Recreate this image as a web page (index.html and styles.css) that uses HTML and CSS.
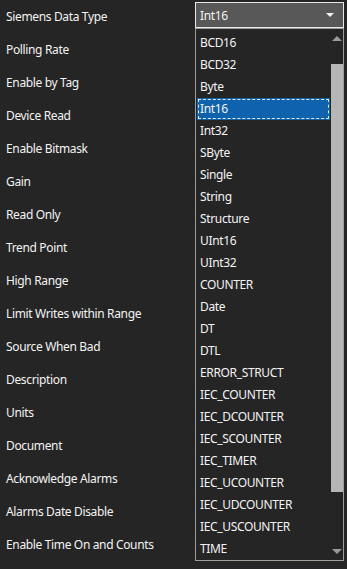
FILE: index.html
```html
<!DOCTYPE html>
<html lang="en">
<head>
    <meta charset="UTF-8">
    <meta name="viewport" content="width=device-width, initial-scale=1.0">
    <title>Tag Properties</title>
    <link rel="stylesheet" href="styles.css">
</head>
<body>
    <div class="props">
        <div class="row">
            <div class="label">Siemens Data Type</div>
            <div class="value">
                <div class="combo">
                    <div class="combo-box">
                        <span>Int16</span>
                        <span class="combo-arrow"></span>
                    </div>
                    <div class="dropdown">
                        <ul class="list">
                            <li>BCD16</li>
                            <li>BCD32</li>
                            <li>Byte</li>
                            <li class="selected">Int16</li>
                            <li>Int32</li>
                            <li>SByte</li>
                            <li>Single</li>
                            <li>String</li>
                            <li>Structure</li>
                            <li>UInt16</li>
                            <li>UInt32</li>
                            <li>COUNTER</li>
                            <li>Date</li>
                            <li>DT</li>
                            <li>DTL</li>
                            <li>ERROR_STRUCT</li>
                            <li>IEC_COUNTER</li>
                            <li>IEC_DCOUNTER</li>
                            <li>IEC_SCOUNTER</li>
                            <li>IEC_TIMER</li>
                            <li>IEC_UCOUNTER</li>
                            <li>IEC_UDCOUNTER</li>
                            <li>IEC_USCOUNTER</li>
                            <li>TIME</li>
                        </ul>
                        <div class="scrollbar">
                            <span class="arrow-up"></span>
                            <div class="track"><div class="thumb"></div></div>
                            <span class="arrow-down"></span>
                        </div>
                    </div>
                </div>
            </div>
        </div>
        <div class="row"><div class="label">Polling Rate</div><div class="value"></div></div>
        <div class="row"><div class="label">Enable by Tag</div><div class="value"></div></div>
        <div class="row"><div class="label">Device Read</div><div class="value"></div></div>
        <div class="row"><div class="label">Enable Bitmask</div><div class="value"></div></div>
        <div class="row"><div class="label">Gain</div><div class="value"></div></div>
        <div class="row"><div class="label">Read Only</div><div class="value"></div></div>
        <div class="row"><div class="label">Trend Point</div><div class="value"></div></div>
        <div class="row"><div class="label">High Range</div><div class="value"></div></div>
        <div class="row"><div class="label">Limit Writes within Range</div><div class="value"></div></div>
        <div class="row"><div class="label">Source When Bad</div><div class="value"></div></div>
        <div class="row"><div class="label">Description</div><div class="value"></div></div>
        <div class="row"><div class="label">Units</div><div class="value"></div></div>
        <div class="row"><div class="label">Document</div><div class="value"></div></div>
        <div class="row"><div class="label">Acknowledge Alarms</div><div class="value"></div></div>
        <div class="row"><div class="label">Alarms Date Disable</div><div class="value"></div></div>
        <div class="row"><div class="label">Enable Time On and Counts</div><div class="value"></div></div>
    </div>
</body>
</html>
```

FILE: styles.css
```css
/* Panel */
body {
    margin: 0;
    background-color: #252526;
    color: #f3f3f3;
    font-family: 'Noto Sans', 'Open Sans', sans-serif;
    font-size: 12px;
    letter-spacing: -0.35px;
    overflow: hidden;
}

.props {
    display: flex;
    flex-direction: column;
}

.row {
    display: flex;
    align-items: center;
    height: 33px;
}

.label {
    width: 189px;
    padding-left: 6px;
    white-space: nowrap;
}

.value {
    flex: 1;
    height: 100%;
}

/* Combobox */
.combo {
    position: relative;
    width: 149px;
    margin-top: 2px;
}

.combo-box {
    display: flex;
    align-items: center;
    justify-content: space-between;
    height: 24px;
    padding: 0 9px 0 4px;
    background-color: #585858;
    border: 1px solid #e8e8e8;
}

.combo-arrow {
    width: 0;
    height: 0;
    border-left: 4px solid transparent;
    border-right: 4px solid transparent;
    border-top: 4px solid #f0f0f0;
}

/* Dropdown list */
.dropdown {
    position: absolute;
    top: 26px;
    left: 0;
    width: 147px;
    height: 531px;
    display: flex;
    background-color: #252526;
    border: 1px solid #9e9d96;
    z-index: 2;
}

.list {
    list-style: none;
    margin: 0;
    padding: 3px 0 0 1px;
    width: 133px;
}

.list li {
    height: 22px;
    line-height: 22px;
    padding-left: 3px;
}

.list li.selected {
    background-color: #0f63ae;
    outline: 1px dashed #dfe9f5;
    outline-offset: -2px;
}

/* Scrollbar */
.scrollbar {
    display: flex;
    flex-direction: column;
    align-items: center;
    width: 12px;
    margin-left: 1px;
}

.arrow-up,
.arrow-down {
    width: 0;
    height: 0;
    border-left: 5px solid transparent;
    border-right: 5px solid transparent;
}

.arrow-up {
    margin-top: 7px;
    border-bottom: 5px solid #9a9a9a;
}

.arrow-down {
    margin-bottom: 6px;
    border-top: 5px solid #9a9a9a;
}

.track {
    flex: 1;
    width: 100%;
    padding-top: 23px;
}

.thumb {
    height: 428px;
    background-color: #b6b6b6;
}
```
